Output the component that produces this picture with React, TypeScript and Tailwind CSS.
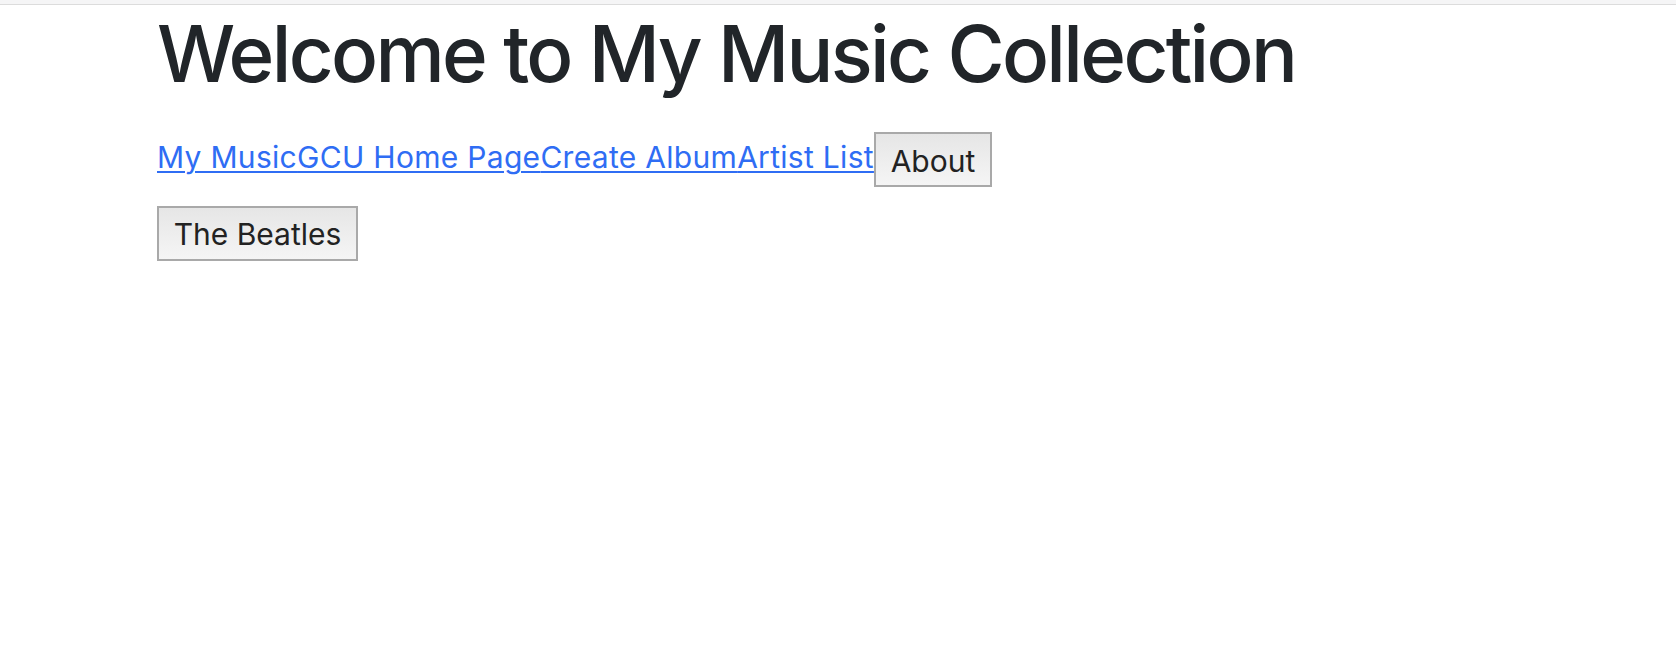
import React from "react";

export default function App() {
  const links = ["My Music", "GCU Home Page", "Create Album", "Artist List"];
  return (
    <div className="min-h-[668px] w-full bg-white" style={{ fontFamily: 'Inter, "Liberation Sans", Arial, sans-serif' }}>
      <div className="h-[5px] w-full bg-[#f5f5f6] border-b border-[#dcdcdc]" />
      <div className="pl-[157px]">
        <h1 className="m-0 pt-[1px] text-[78px] leading-[96px] font-medium tracking-[-2.7px] text-[#212529] whitespace-nowrap">
          Welcome to My Music Collection
        </h1>
        <div className="mt-[30px] flex items-start">
          <div className="mt-[7px] flex text-[30px] leading-[36px] tracking-[0.3px] whitespace-nowrap">
            {links.map((l) => (
              <a key={l} href="#" className="text-[#2f6df4] underline underline-offset-[3px] decoration-[2px]">
                {l}
              </a>
            ))}
          </div>
          <button className="h-[55px] w-[118px] border-2 border-[#a9a9a9] bg-gradient-to-b from-[#e6e6e6] to-[#f5f5f5] text-[30px] leading-[36px] text-[#222] pt-[3px]">
            About
          </button>
        </div>
        <div className="mt-[19px]">
          <button className="h-[55px] w-[201px] border-2 border-[#a9a9a9] bg-gradient-to-b from-[#e6e6e6] to-[#f5f5f5] text-[30px] leading-[36px] text-[#222]">
            The Beatles
          </button>
        </div>
      </div>
    </div>
  );
}
